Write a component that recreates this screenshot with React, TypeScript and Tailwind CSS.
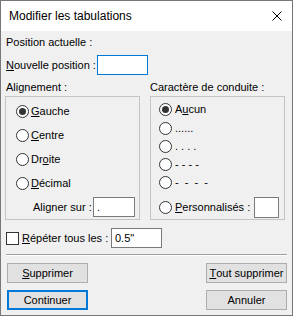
function Radio({ checked = false }: { checked?: boolean }) {
  return (
    <span className="flex h-[13px] w-[13px] shrink-0 items-center justify-center rounded-full border border-[#333] bg-white">
      {checked && <span className="h-[7px] w-[7px] rounded-full bg-[#333]" />}
    </span>
  );
}

function Field({ w, h = 20, value = "", focused = false }: { w: string; h?: number; value?: string; focused?: boolean }) {
  return (
    <div
      className={`${w} ${h === 21 ? "h-[21px]" : "h-[20px]"} flex items-center bg-white pl-[3px] border ${
        focused ? "border-[#0078d7]" : "border-[#7a7a7a]"
      }`}
    >
      {value}
    </div>
  );
}

function Button({ children, primary = false }: { children: React.ReactNode; primary?: boolean }) {
  return (
    <div
      className={`flex h-[20px] w-[81px] items-center justify-center bg-[#e1e1e1] ${
        primary ? "border-2 border-[#0078d7]" : "border border-[#adadad]"
      }`}
    >
      {children}
    </div>
  );
}

export default function App() {
  return (
    <div className="flex h-[316px] w-[293px] flex-col border border-[#777] bg-[#f0f0f0] font-['Liberation_Sans',Arial,sans-serif] text-[11px] leading-[13px] text-black">
      {/* barre de titre */}
      <div className="flex h-[30px] shrink-0 items-center justify-between bg-white pl-[8px] pr-[10px] text-[12px]">
        <span>Modifier les tabulations</span>
        <svg width="10" height="10" viewBox="0 0 10 10" className="shrink-0">
          <path d="M0.5 0.5 L9.5 9.5 M9.5 0.5 L0.5 9.5" stroke="#000" strokeWidth="1" />
        </svg>
      </div>

      <div className="flex flex-col px-[5px] pt-[1px]">
        <div className="flex h-[20px] items-center">Position actuelle :</div>
        <div className="mt-[3px] flex h-[20px] items-center">
          <span className="w-[91px]">
            <u>N</u>ouvelle position :
          </span>
          <Field w="w-[51px]" focused />
        </div>

        <div className="-ml-px mt-[6px] flex gap-[10px]">
          {/* Alignement */}
          <div className="w-[135px]">
            <div className="h-[13px] pl-px">Alignement :</div>
            <div className="mt-[2px] flex flex-col border border-[#c4c4c4] pt-[2px]">
              {[
                ["G", "auche", true],
                ["C", "entre", false],
              ].map(([a, b, c]) => (
                <div key={a as string} className="flex h-[24px] items-center gap-[2px] pl-[10px]">
                  <Radio checked={c as boolean} />
                  <span>
                    <u>{a}</u>
                    {b}
                  </span>
                </div>
              ))}
              <div className="flex h-[24px] items-center gap-[2px] pl-[10px]">
                <Radio />
                <span>
                  Dr<u>o</u>ite
                </span>
              </div>
              <div className="flex h-[24px] items-center gap-[2px] pl-[10px]">
                <Radio />
                <span>
                  <u>D</u>écimal
                </span>
              </div>
              <div className="flex h-[24px] items-center pl-[27px] pr-[4px]">
                <span>Aligner sur :</span>
                <div className="ml-auto">
                  <Field w="w-[42px]" value="." />
                </div>
              </div>
            </div>
          </div>

          {/* Caractère de conduite */}
          <div className="w-[135px]">
            <div className="h-[13px]">Caractère de conduite :</div>
            <div className="mt-[2px] flex flex-col border border-[#c4c4c4] pb-[1px] pt-[3px]">
              <div className="flex h-[19px] items-center gap-[3px] pl-[8px]">
                <Radio checked />
                <span>
                  A<u>u</u>cun
                </span>
              </div>
              {["......", ". . . .", "- - - -", "-  -  -  -"].map((t) => (
                <div key={t} className="flex h-[18px] items-center gap-[3px] pl-[8px]">
                  <Radio />
                  <span className="whitespace-pre">{t}</span>
                </div>
              ))}
              <div className="mt-[6px] flex h-[21px] items-center gap-[3px] pl-[8px] pr-[5px]">
                <Radio />
                <span>
                  <u>P</u>ersonnalisés :
                </span>
                <div className="ml-auto">
                  <Field w="w-[25px]" h={21} />
                </div>
              </div>
            </div>
          </div>
        </div>

        <div className="mt-[8px] flex h-[20px] items-center">
          <span className="h-[13px] w-[13px] shrink-0 border border-[#333] bg-white" />
          <span className="ml-[3px] w-[89px]">
            <u>R</u>épéter tous les :
          </span>
          <Field w="w-[51px]" value={'0.5"'} />
        </div>

        <div className="mt-[6px] border-t border-b border-t-[#a0a0a0] border-b-white" />

        <div className="mt-[7px] flex justify-between pl-px">
          <Button>
            <u>S</u>upprimer
          </Button>
          <Button>
            <u>T</u>out supprimer
          </Button>
        </div>
        <div className="mt-[7px] flex justify-between pl-px">
          <Button primary>Continuer</Button>
          <Button>Annuler</Button>
        </div>
      </div>
    </div>
  );
}
